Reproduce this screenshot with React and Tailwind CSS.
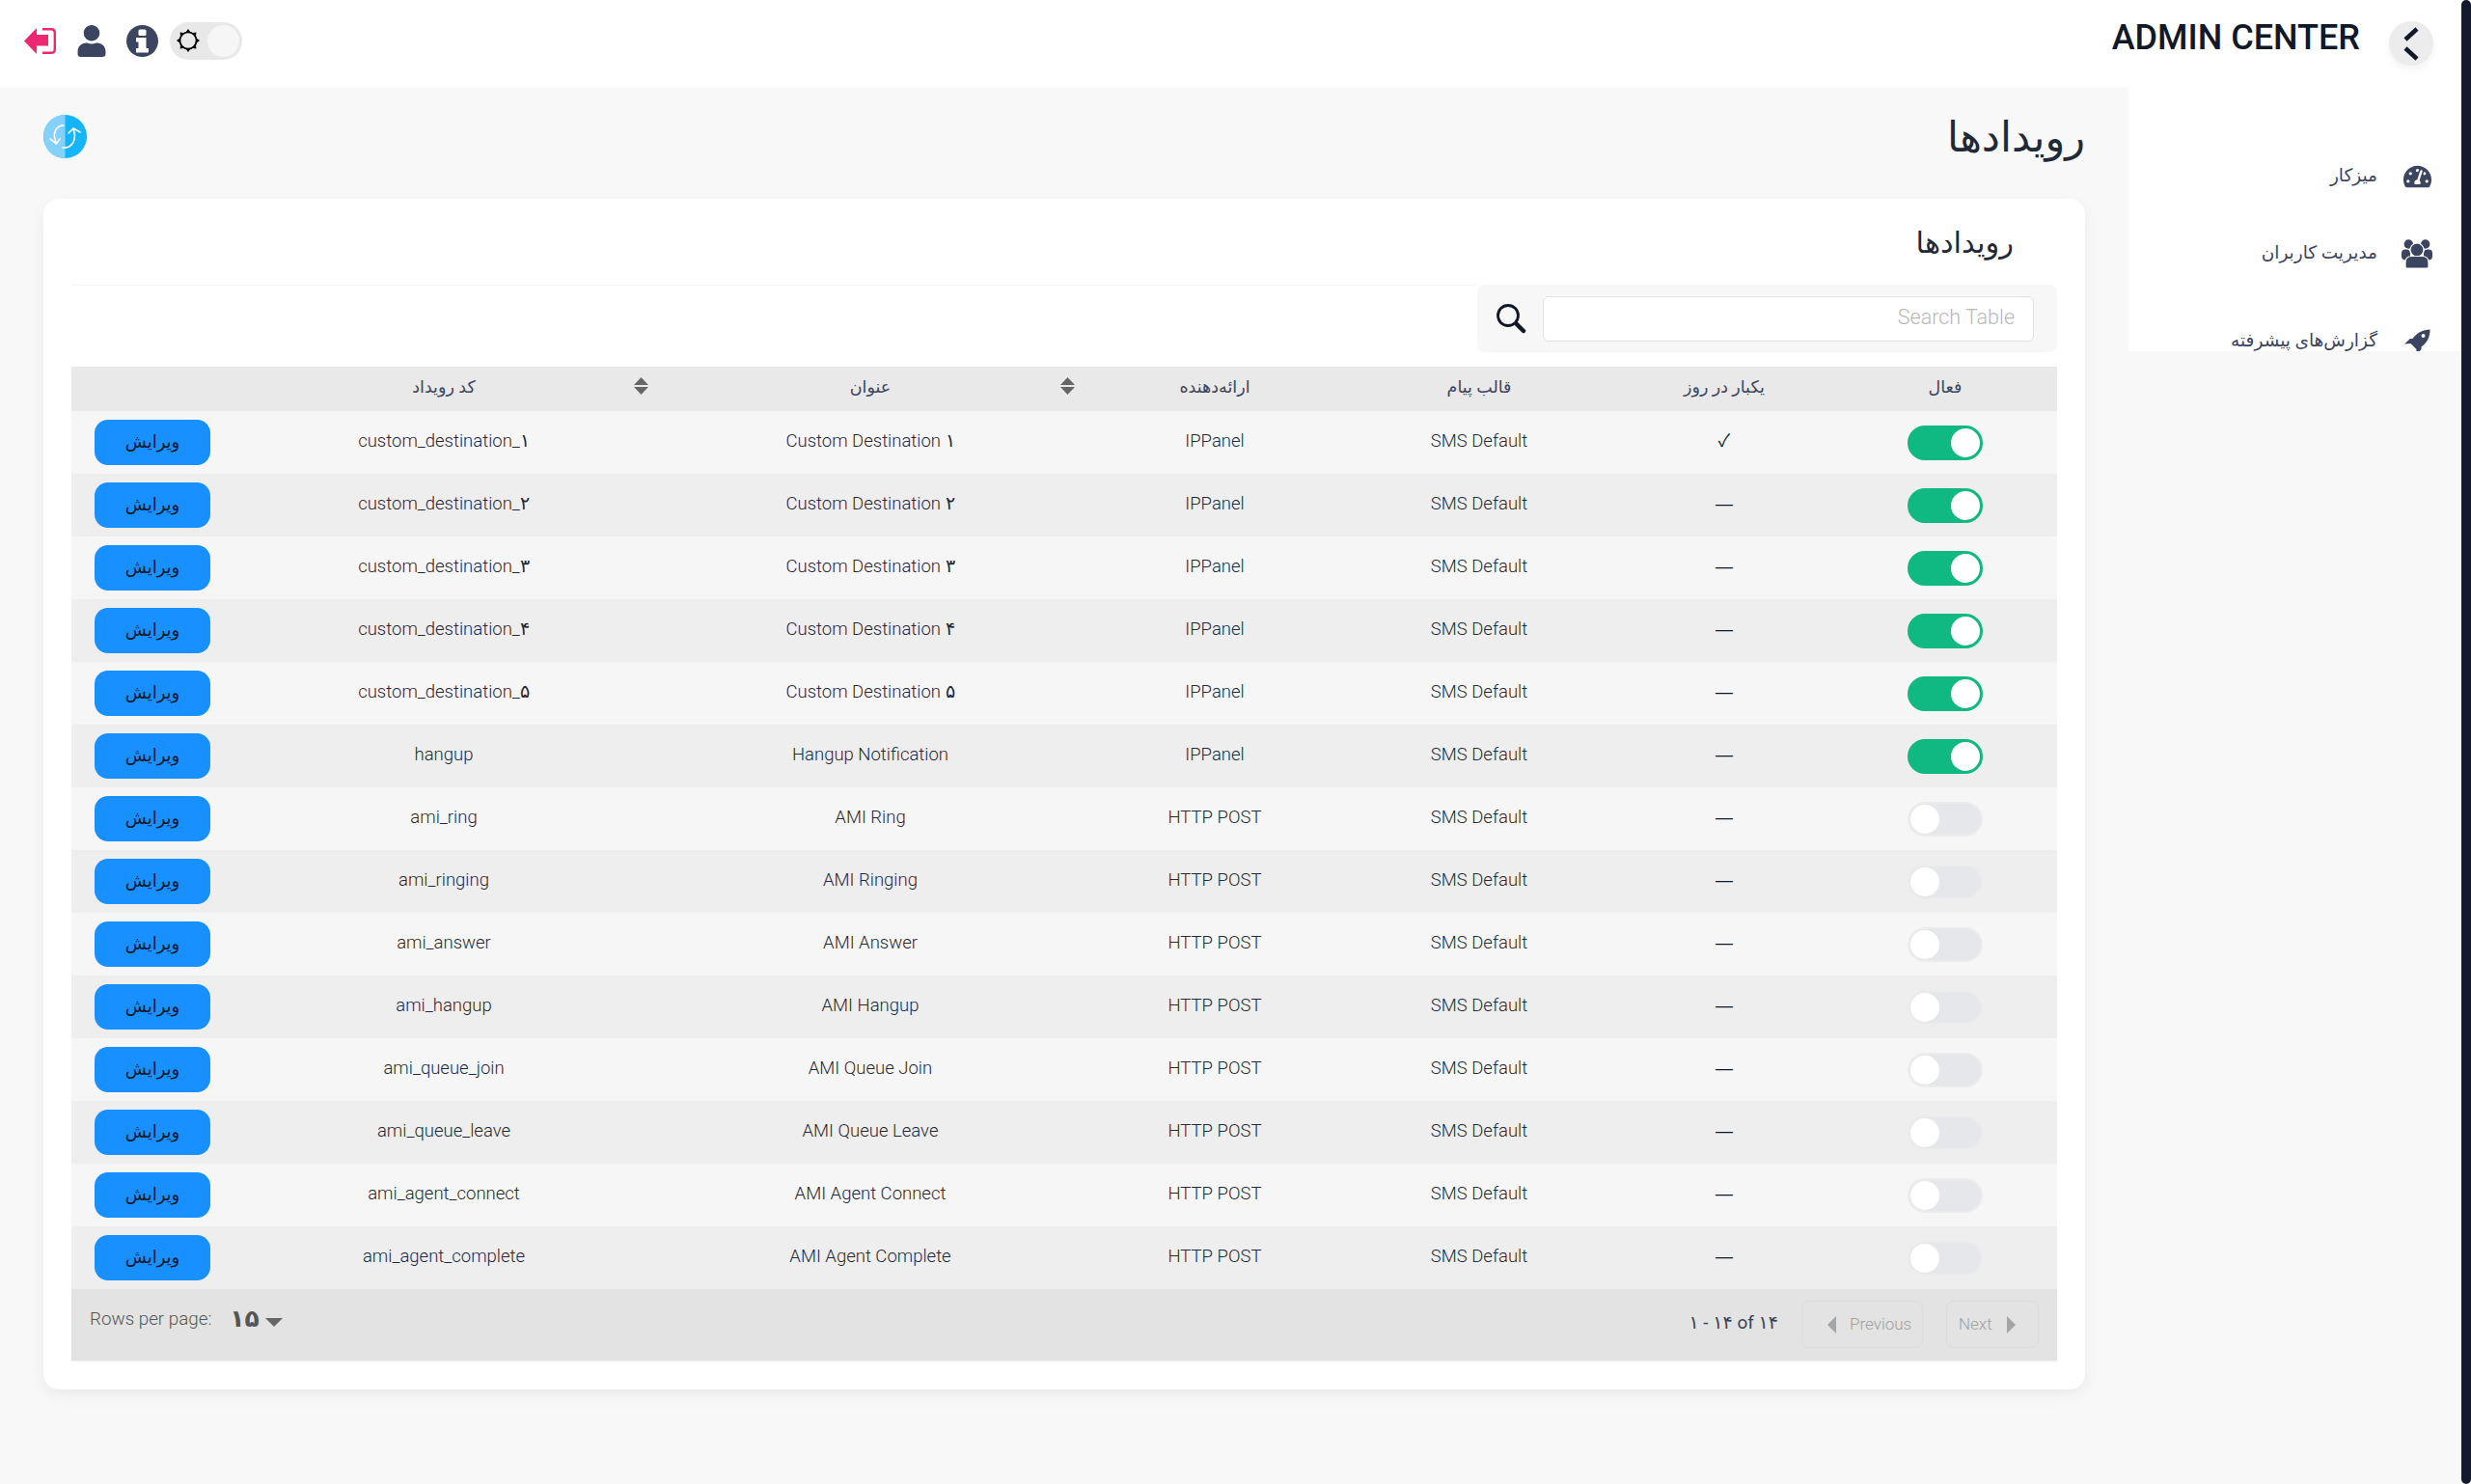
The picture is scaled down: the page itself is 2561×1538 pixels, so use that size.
import React from "react";
import { FaUser, FaTachometerAlt } from "react-icons/fa";

const cols = "grid grid-cols-[232px_226px_282px_266px_448px_436px_168px]";
const fa = "font-['Roboto','DejaVu_Sans',sans-serif]";

const rows = [
  ["✓", "IPPanel", "Custom Destination ۱", "custom_destination_۱", true],
  ["—", "IPPanel", "Custom Destination ۲", "custom_destination_۲", true],
  ["—", "IPPanel", "Custom Destination ۳", "custom_destination_۳", true],
  ["—", "IPPanel", "Custom Destination ۴", "custom_destination_۴", true],
  ["—", "IPPanel", "Custom Destination ۵", "custom_destination_۵", true],
  ["—", "IPPanel", "Hangup Notification", "hangup", true],
  ["—", "HTTP POST", "AMI Ring", "ami_ring", false],
  ["—", "HTTP POST", "AMI Ringing", "ami_ringing", false],
  ["—", "HTTP POST", "AMI Answer", "ami_answer", false],
  ["—", "HTTP POST", "AMI Hangup", "ami_hangup", false],
  ["—", "HTTP POST", "AMI Queue Join", "ami_queue_join", false],
  ["—", "HTTP POST", "AMI Queue Leave", "ami_queue_leave", false],
  ["—", "HTTP POST", "AMI Agent Connect", "ami_agent_connect", false],
  ["—", "HTTP POST", "AMI Agent Complete", "ami_agent_complete", false],
];

function Toggle({ on }) {
  return (
    <div dir="ltr" className={`flex h-9 w-[78px] items-center rounded-full border-2 px-[1px] ${on ? "justify-end border-[#10b981] bg-[#10b981]" : "justify-start border-[#ececec] bg-[#e5e7eb]"}`}>
      <div className="h-[30px] w-[30px] rounded-full bg-white" />
    </div>
  );
}

function Sun() {
  return (
    <svg width="24" height="24" viewBox="0 0 24 24">
      <circle cx="12" cy="12" r="8.6" fill="none" stroke="#000" strokeWidth="1.8" />
      {[0, 45, 90, 135, 180, 225, 270, 315].map((a) => (
        <path key={a} d="M9.8 3 L12 0 L14.2 3 Z" fill="#000" transform={`rotate(${a} 12 12)`} />
      ))}
    </svg>
  );
}

function Refresh() {
  return (
    <svg width="45" height="45" viewBox="0 0 45 45">
      <circle cx="22.5" cy="22.5" r="22.5" fill="#14b5fb" />
      <path d="M22.5 0 A22.5 22.5 0 0 0 22.5 45 Z" fill="#85d1fd" />
      <g fill="none" stroke="#fff" strokeWidth="1.6" strokeLinecap="round" strokeLinejoin="round">
        <path d="M21 11 C13 11 9 19 13 28" />
        <path d="M7 25 L13.5 30 L17 25" />
        <path d="M20 34 C30 35 35 25 31 15" />
        <path d="M26 19 L31 14 L38 18" />
      </g>
    </svg>
  );
}

function Search() {
  return (
    <svg width="32" height="32" viewBox="0 0 32 32" fill="none" stroke="#111827" className="shrink-0">
      <circle cx="13" cy="13" r="10.5" strokeWidth="2.8" />
      <path d="M21.5 21.5 L29 29" strokeWidth="4.5" strokeLinecap="round" />
    </svg>
  );
}

function Logout() {
  return (
    <svg width="33" height="27" viewBox="0 0 33 27">
      <path d="M0 13.5 L13 0 V7 H25 V18.5 H13 V27 Z" fill="#ec2873" />
      <path d="M19 1.2 H28 Q31.8 1.2 31.8 5 V22 Q31.8 25.8 28 25.8 H19" fill="none" stroke="#ec2873" strokeWidth="2.4" />
    </svg>
  );
}

function Info() {
  return (
    <svg width="33" height="33" viewBox="0 0 33 33">
      <circle cx="16.5" cy="16.5" r="16.5" fill="#3b4560" />
      <rect x="12.5" y="4.5" width="8" height="6.5" rx="1.5" fill="#fff" />
      <path d="M10 13 H20.5 V24 H23 V28.5 H10 V24 H12.5 V17.5 H10 Z" fill="#fff" />
    </svg>
  );
}

function Users() {
  return (
    <svg width="32" height="30" viewBox="0 0 32 30" fill="#3b4560">
      <circle cx="7.3" cy="5" r="4.7" />
      <circle cx="24.7" cy="5" r="4.7" />
      <rect x="0" y="10.5" width="9" height="11" rx="4" />
      <rect x="23" y="10.5" width="9" height="11" rx="4" />
      <circle cx="16" cy="11" r="7" stroke="#fff" strokeWidth="1.2" />
      <path d="M4 29 V24 Q4 17.5 11 17.5 H21 Q28 17.5 28 24 V29 Q28 30 26 30 H6 Q4 30 4 29 Z" stroke="#fff" strokeWidth="1.2" />
    </svg>
  );
}

function Rocket() {
  return (
    <svg width="27" height="27" viewBox="0 0 27 27" fill="#3b4560">
      <path d="M26.5 0.5 C19 0.5 13 4 8.5 10 L6 10 L0 15.5 L6.5 15 L12.5 21 L12 27 L17.5 21 L17.5 18.5 C24 14 26.5 8 26.5 0.5 Z" />
      <circle cx="19.5" cy="7" r="2" fill="#fff" />
    </svg>
  );
}

function Sort({ className }) {
  return (
    <svg width="15" height="18" viewBox="0 0 15 18" fill="#666" className={className}>
      <path d="M7.5 0 L15 8 H0 Z" />
      <path d="M0 10 H15 L7.5 18 Z" />
    </svg>
  );
}

function Header() {
  return (
    <header className="flex h-[90px] items-center justify-between bg-white pl-[25px] pr-[29px]">
      <div className="flex items-center pb-[6px]">
        <Logout />
        <FaUser className="ml-[22px] h-[33px] w-[30px] text-[#3b4560]" />
        <div className="ml-[21px]"><Info /></div>
        <div className="ml-3 flex h-[39px] w-[75px] items-center justify-between rounded-full bg-[#e8e8e8] pl-[7px] pr-[3px]">
          <Sun />
          <div className="h-[33px] w-[33px] rounded-full bg-[#f6f6f6]" />
        </div>
      </div>
      <div className="flex items-center">
        <span className="pb-[12px] font-['Roboto',sans-serif] text-[36px] font-medium text-[#111827]">ADMIN CENTER</span>
        <button className="ml-[30px] flex h-[46px] w-[46px] items-center justify-center rounded-full bg-[#ececec] shadow-[0_4px_8px_rgba(0,0,0,0.05)]">
          <svg width="16" height="35" viewBox="0 0 16 35" fill="none" stroke="#111827" strokeWidth="4.5">
            <path d="M14 2 L2 13" />
            <path d="M2 22 L14 33" />
          </svg>
        </button>
      </div>
    </header>
  );
}

function Sidebar() {
  const item = "flex items-center justify-end gap-[25px] text-[18.5px] text-[#3b4560]";
  return (
    <aside dir="ltr" className={`h-[274px] w-[345px] shrink-0 overflow-hidden bg-white pr-[30px] pt-[78px] ${fa}`}>
      <div className={item}>
        <span dir="rtl">میزکار</span>
        <div className="flex h-[30px] w-[32px] items-center justify-center"><FaTachometerAlt className="h-[26px] w-[29px]" /></div>
      </div>
      <div className={`${item} mt-[50px]`}>
        <span dir="rtl">مدیریت کاربران</span>
        <Users />
      </div>
      <div className={`${item} mt-[61px]`}>
        <span dir="rtl">گزارش‌های پیشرفته</span>
        <div className="flex h-[30px] w-[32px] items-center justify-center"><Rocket /></div>
      </div>
    </aside>
  );
}

function Table() {
  const cell = "pb-[1px]";
  return (
    <div dir="rtl" className={`mx-[29px] mt-[-1px] ${fa}`}>
      <div className="flex h-[85px] bg-white">
        <div className="flex h-[70px] items-center gap-[17px] rounded-lg bg-[#f7f7f7] pl-[19px] pr-6">
          <div dir="ltr" className="flex h-[47px] w-[509px] items-center justify-end rounded-md border border-[#e2e2e2] bg-white px-[19px] pb-[1px] text-[21.5px] font-light text-[#b8b8b8]">Search Table</div>
          <Search />
        </div>
        <div className="flex-1 border-t border-[#f5f5f5]" />
      </div>
      <div className={`${cols} h-[46px] items-center bg-[#e9e9e9] pb-[3px] text-center text-[17.5px] text-[#3b4560]`}>
        <div>فعال</div>
        <div>یکبار در روز</div>
        <div>قالب پیام</div>
        <div>ارائه‌دهنده</div>
        <div className="relative">عنوان<Sort className="absolute right-[12px] top-[3px]" /></div>
        <div className="relative">کد رویداد<Sort className="absolute right-[6px] top-[3px]" /></div>
        <div />
      </div>
      {rows.map((r, i) => (
        <div key={r[3]} className={`${cols} h-[65px] items-center text-center text-[18.5px] font-light text-[#1f2937] ${i % 2 ? "bg-[#eeeeee]" : "bg-[#f6f6f6]"}`}>
          <div className="flex justify-center"><Toggle on={r[4]} /></div>
          <div className="pb-[3px] font-['Liberation_Sans','Noto_Sans_CJK_SC',sans-serif] text-[18px] font-normal text-[#111827]">{r[0]}</div>
          <div dir="ltr" className={cell}>SMS Default</div>
          <div dir="ltr" className={cell}>{r[1]}</div>
          <div dir="ltr" className={cell}>{r[2]}</div>
          <div dir="ltr" className={cell}>{r[3]}</div>
          <div className="flex justify-center">
            <button className="h-[47px] w-[120px] rounded-[14px] bg-[#1890ff] pb-[2px] text-[18px] font-normal text-[#111827]">ویرایش</button>
          </div>
        </div>
      ))}
      <div dir="ltr" className="flex h-[74px] justify-between bg-[#e3e3e3] pl-[19px] pr-[19px] pt-3 shadow-[0_1px_2px_rgba(0,0,0,0.08)]">
        <div className="flex h-[38px] items-center text-[#555]">
          <span className="text-[18.8px] font-light">Rows per page:</span>
          <span className="ml-[19px] text-[25px] font-semibold">۱۵</span>
          <svg width="18" height="9" viewBox="0 0 18 9" fill="#666" className="ml-[6px] mt-[6px]"><path d="M0 0 H18 L9 9 Z" /></svg>
        </div>
        <div className="flex items-center self-start">
          <span className="pb-[3px] text-[19px] text-[#374151]">۱ - ۱۴ of ۱۴</span>
          <div className="ml-6 flex h-[49px] w-[126px] items-center gap-[14px] rounded-lg border border-[#dcdcdc] pl-[26px] text-[17px] font-light text-[#a0a0a0]">
            <svg width="9" height="18" viewBox="0 0 9 18" fill="#a5a5a5"><path d="M9 0 V18 L0 9 Z" /></svg>
            Previous
          </div>
          <div className="ml-6 flex h-[49px] w-[96px] items-center gap-[15px] rounded-lg border border-[#dcdcdc] pl-3 text-[17px] font-light text-[#a0a0a0]">
            Next
            <svg width="9" height="18" viewBox="0 0 9 18" fill="#a5a5a5"><path d="M0 0 V18 L9 9 Z" /></svg>
          </div>
        </div>
      </div>
    </div>
  );
}

export default function App() {
  return (
    <div className="flex h-[1538px] w-full overflow-hidden bg-white">
      <div className="flex min-w-0 flex-1 flex-col bg-[#f8f8f8]">
        <Header />
        <div className="flex flex-1">
          <main className="min-w-0 flex-1 pl-[45px] pr-[45px]">
            <div className="flex h-[116px] items-start justify-between pt-[29px]">
              <Refresh />
              <h1 dir="rtl" className={`mt-[-5px] text-[43px] font-normal leading-[56px] text-[#1f2937] ${fa}`}>رویدادها</h1>
            </div>
            <section className="h-[1234px] rounded-2xl bg-white pt-[23px] shadow-[0_6px_16px_rgba(0,0,0,0.06)]">
              <h2 dir="rtl" className={`h-[67px] pr-[74px] text-[30.5px] font-normal leading-[46px] text-[#1f2937] ${fa}`}>رویدادها</h2>
              <Table />
            </section>
          </main>
          <Sidebar />
        </div>
      </div>
      <div className="h-full w-[10px] shrink-0 rounded-full bg-[#151b2e]" />
    </div>
  );
}
